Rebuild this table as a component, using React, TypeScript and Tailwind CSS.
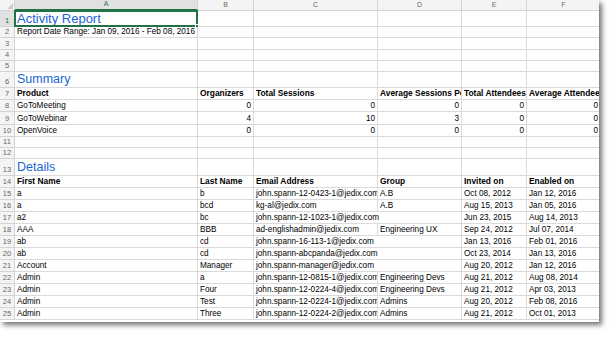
const COLS = ["A", "B", "C", "D", "E", "F"];

const widths: Record<number, string> = {
  183: "w-[183px]",
  56: "w-[56px]",
  124: "w-[124px]",
  84: "w-[84px]",
  65: "w-[65px]",
  74: "w-[74px]",
  208: "w-[208px]",
};
const W = [183, 56, 124, 84, 65, 74];

const heights: Record<number, string> = {
  11: "h-[11px]",
  12: "h-[12px]",
  13: "h-[13px]",
  16: "h-[16px]",
  17: "h-[17px]",
};

type Cell = { t?: string; span?: number; num?: boolean; bold?: boolean; head?: boolean };
type Row = { n: number; h: number; cells: Cell[] };

const t = (s: string): Cell => ({ t: s });
const n = (s: string): Cell => ({ t: s, num: true });
const b = (s: string): Cell => ({ t: s, bold: true });
const wide = (s: string): Cell => ({ t: s, span: 2 });

const rows: Row[] = [
  { n: 1, h: 16, cells: [{ t: "Activity Report", head: true }] },
  { n: 2, h: 11, cells: [t("Report Date Range: Jan 09, 2016 - Feb 08, 2016")] },
  { n: 3, h: 12, cells: [] },
  { n: 4, h: 11, cells: [] },
  { n: 5, h: 11, cells: [] },
  { n: 6, h: 16, cells: [{ t: "Summary", head: true }] },
  {
    n: 7,
    h: 12,
    cells: [
      b("Product"),
      b("Organizers"),
      b("Total Sessions"),
      b("Average Sessions Per Organizer"),
      b("Total Attendees"),
      b("Average Attendees Per Session"),
    ],
  },
  { n: 8, h: 12, cells: [t("GoToMeeting"), n("0"), n("0"), n("0"), n("0"), n("0")] },
  { n: 9, h: 13, cells: [t("GoToWebinar"), n("4"), n("10"), n("3"), n("0"), n("0")] },
  { n: 10, h: 12, cells: [t("OpenVoice"), n("0"), n("0"), n("0"), n("0"), n("0")] },
  { n: 11, h: 11, cells: [] },
  { n: 12, h: 11, cells: [] },
  { n: 13, h: 17, cells: [{ t: "Details", head: true }] },
  {
    n: 14,
    h: 12,
    cells: [b("First Name"), b("Last Name"), b("Email Address"), b("Group"), b("Invited on"), b("Enabled on")],
  },
  { n: 15, h: 12, cells: [t("a"), t("b"), t("john.spann-12-0423-1@jedix.com"), t("A.B"), t("Oct 08, 2012"), t("Jan 12, 2016")] },
  { n: 16, h: 12, cells: [t("a"), t("bcd"), t("kg-al@jedix.com"), t("A.B"), t("Aug 15, 2013"), t("Jan 05, 2016")] },
  { n: 17, h: 12, cells: [t("a2"), t("bc"), wide("john.spann-12-1023-1@jedix.com"), t("Jun 23, 2015"), t("Aug 14, 2013")] },
  { n: 18, h: 12, cells: [t("AAA"), t("BBB"), t("ad-englishadmin@jedix.com"), t("Engineering UX"), t("Sep 24, 2012"), t("Jul 07, 2014")] },
  { n: 19, h: 12, cells: [t("ab"), t("cd"), wide("john.spann-16-113-1@jedix.com"), t("Jan 13, 2016"), t("Feb 01, 2016")] },
  { n: 20, h: 12, cells: [t("ab"), t("cd"), wide("john.spann-abcpanda@jedix.com"), t("Oct 23, 2014"), t("Jan 13, 2016")] },
  { n: 21, h: 12, cells: [t("Account"), t("Manager"), wide("john.spann-manager@jedix.com"), t("Aug 20, 2012"), t("Jan 12, 2016")] },
  { n: 22, h: 12, cells: [t("Admin"), t("a"), t("john.spann-12-0815-1@jedix.com"), t("Engineering Devs"), t("Aug 21, 2012"), t("Aug 08, 2014")] },
  { n: 23, h: 12, cells: [t("Admin"), t("Four"), t("john.spann-12-0224-4@jedix.com"), t("Engineering Devs"), t("Aug 21, 2012"), t("Apr 03, 2013")] },
  { n: 24, h: 12, cells: [t("Admin"), t("Test"), t("john.spann-12-0224-1@jedix.com"), t("Admins"), t("Aug 20, 2012"), t("Feb 08, 2016")] },
  { n: 25, h: 12, cells: [t("Admin"), t("Three"), t("john.spann-12-0224-2@jedix.com"), t("Admins"), t("Aug 21, 2012"), t("Oct 01, 2013")] },
];

function SheetRow({ row }: { row: Row }) {
  const out: { cell: Cell; w: number; col: number }[] = [];
  let col = 0;
  for (const c of row.cells) {
    const span = c.span ?? 1;
    let w = 0;
    for (let i = 0; i < span; i++) w += W[col + i];
    out.push({ cell: c, w, col });
    col += span;
  }
  while (col < W.length) {
    out.push({ cell: {}, w: W[col], col });
    col++;
  }
  const selected = row.n === 1;
  return (
    <div className={`flex ${heights[row.h]}`}>
      <div
        className={`w-[15px] shrink-0 flex items-end justify-center border-r border-b border-[#d4d4d4] text-[7.5px] leading-[10px] ${
          selected ? "bg-[#e1e1e1] text-[#217346]" : "bg-[#f4f4f4] text-[#666]"
        }`}
      >
        {row.n}
      </div>
      {out.map(({ cell, w, col }) => (
        <div
          key={col}
          className={`${widths[w]} shrink-0 relative flex items-end border-r border-b border-[#dadada] px-[2px] whitespace-nowrap ${
            cell.num ? "justify-end" : "justify-start"
          } ${col === 0 && cell.head ? "overflow-visible" : "overflow-hidden"}`}
        >
          {cell.head ? (
            <span className={`text-[#1a64d4] leading-[15px] ${row.n === 1 ? "text-[13px]" : "text-[12.5px]"}`}>
              {cell.t}
            </span>
          ) : (
            <span className={`text-[8.2px] leading-[11px] text-black ${cell.bold ? "font-bold text-[8.4px]" : ""}`}>
              {cell.t}
            </span>
          )}
          {selected && col === 0 && (
            <div className="absolute -left-[1px] -top-[1px] -right-[1px] -bottom-[1px] border-2 border-[#217346]">
              <div className="absolute -right-[3px] -bottom-[3px] w-[4px] h-[4px] bg-[#217346] border border-white" />
            </div>
          )}
        </div>
      ))}
    </div>
  );
}

export default function App() {
  return (
    <div className="w-[615px] h-[337px] bg-white overflow-hidden font-['Liberation_Sans',Arial,sans-serif]">
      <div className="w-[599px] h-[322px] overflow-hidden bg-white shadow-[3px_3px_5px_rgba(0,0,0,0.55)]">
        <div className="flex h-[11px]">
          <div className="w-[15px] shrink-0 relative bg-[#f4f4f4] border-r border-b border-[#d4d4d4]">
            <div className="absolute right-[1px] bottom-[1px] w-0 h-0 border-l-[6px] border-l-transparent border-b-[6px] border-b-[#cfcfcf]" />
          </div>
          {COLS.map((c, i) => (
            <div
              key={c}
              className={`${widths[W[i]]} shrink-0 flex items-center justify-center text-[7px] border-r ${
                i === 0
                  ? "bg-[#e1e1e1] text-[#217346] border-b-2 border-b-[#217346] border-r-[#d4d4d4]"
                  : "bg-[#f4f4f4] text-[#666] border-b border-[#d4d4d4]"
              }`}
            >
              {c}
            </div>
          ))}
        </div>
        {rows.map((r) => (
          <SheetRow key={r.n} row={r} />
        ))}
      </div>
    </div>
  );
}
